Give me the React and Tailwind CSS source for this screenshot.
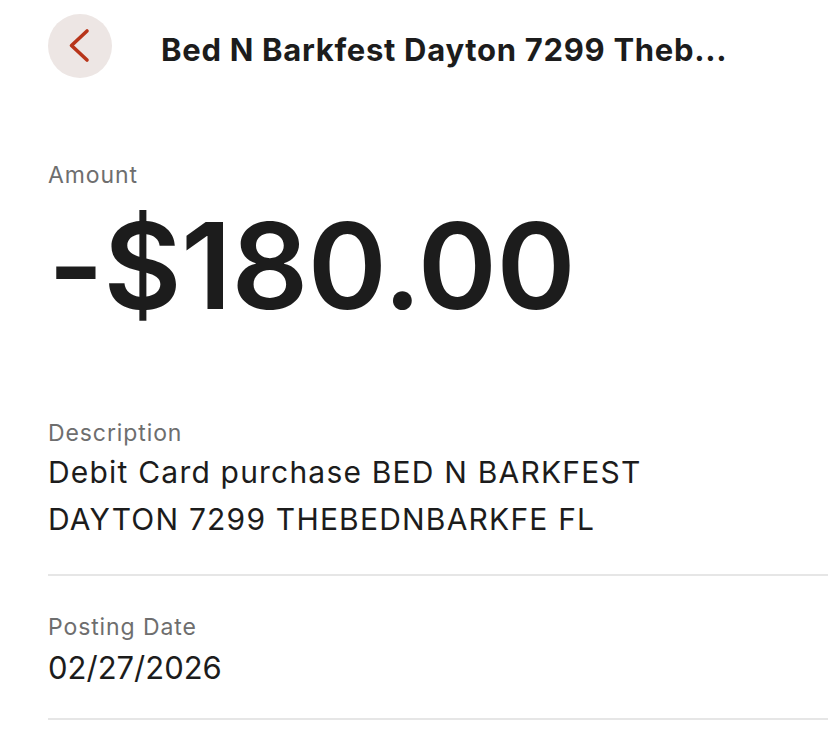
import React from "react";

function BackButton() {
  return (
    <button className="flex h-16 w-16 shrink-0 items-center justify-center rounded-full bg-[#ede6e4]">
      <svg width="64" height="64" viewBox="0 0 64 64" fill="none">
        <polyline
          points="39,17 23.5,31.5 39,46"
          stroke="#b8351a"
          strokeWidth="3.6"
          strokeLinecap="round"
          strokeLinejoin="round"
        />
      </svg>
    </button>
  );
}

function Label({ children, className = "" }) {
  return (
    <div className={`text-[23px] leading-none tracking-[0.9px] text-[#6e6e6e] ${className}`}>
      {children}
    </div>
  );
}

export default function App() {
  return (
    <div className="min-h-screen bg-white pl-12 font-['Inter',sans-serif] text-[#1c1c1c]">
      {/* Header */}
      <div className="flex items-center gap-[49px] pt-[14px]">
        <BackButton />
        <h1 className="whitespace-nowrap pt-[6px] text-[31px] font-bold leading-none tracking-[0.7px]">
          Bed N Barkfest Dayton 7299 Theb...
        </h1>
      </div>

      {/* Amount */}
      <Label className="mt-[86px]">Amount</Label>
      <div className="mt-[19px] text-[120px] font-semibold leading-none tracking-[-0.4px]">
        -$180.00
      </div>

      {/* Description */}
      <Label className="mt-[96px]">Description</Label>
      <div className="mt-[4px] text-[30px] leading-[47px] tracking-[1.2px]">
        Debit Card purchase BED N BARKFEST
        <br />
        DAYTON 7299 THEBEDNBARKFE FL
      </div>
      <div className="mt-[31px] h-[2px] bg-[#e6e6e6]" />

      {/* Posting date */}
      <Label className="mt-[40px]">Posting Date</Label>
      <div className="mt-[13px] text-[31px] leading-none">02/27/2026</div>
      <div className="mt-[35px] h-[2px] bg-[#e6e6e6]" />
    </div>
  );
}
